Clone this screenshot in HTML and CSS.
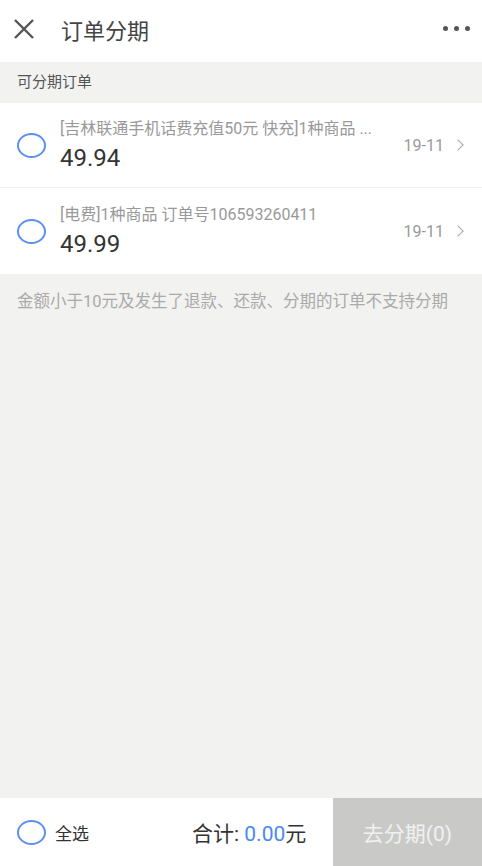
FILE: index.html
```html
<!DOCTYPE html>
<html lang="zh-CN">
    <head>
        <meta charset="UTF-8">
        <meta name="viewport" content="width=device-width, initial-scale=1.0">
        <title>订单分期</title>
        <link rel="stylesheet" href="styles.css">
    </head>
    <body>
        <header class="topbar">
            <svg class="close" width="22" height="20" viewBox="0 0 22 20">
                <path d="M2 1 L20 19 M20 1 L2 19" stroke="#555" stroke-width="2.4" fill="none"/>
            </svg>
            <h1>订单分期</h1>
            <div class="more"><i></i><i></i><i></i></div>
        </header>

        <main class="content">
            <div class="section-title">可分期订单</div>
            <ul class="orders">
                <li class="order">
                    <span class="radio"></span>
                    <div class="info">
                        <p class="name">[吉林联通手机话费充值50元 快充]1种商品 ...</p>
                        <p class="price">49.94</p>
                    </div>
                    <span class="date">19-11</span>
                    <span class="arrow"></span>
                </li>
                <li class="order">
                    <span class="radio"></span>
                    <div class="info">
                        <p class="name">[电费]1种商品 订单号106593260411</p>
                        <p class="price">49.99</p>
                    </div>
                    <span class="date">19-11</span>
                    <span class="arrow"></span>
                </li>
            </ul>
            <p class="note">金额小于10元及发生了退款、还款、分期的订单不支持分期</p>
        </main>

        <footer class="bottombar">
            <label class="select-all"><span class="radio"></span>全选</label>
            <div class="total">合计: <span>0.00</span>元</div>
            <button class="submit">去分期(0)</button>
        </footer>
    </body>
</html>
```

FILE: styles.css
```css
* {
    box-sizing: border-box;
    margin: 0;
    padding: 0;
}

body {
    width: 482px;
    height: 866px;
    display: flex;
    flex-direction: column;
    background-color: #f2f2f1;
    font-family: Roboto, "Noto Sans CJK SC", sans-serif;
    color: #333;
}

.topbar {
    height: 62px;
    background-color: #fff;
    display: flex;
    align-items: center;
    padding: 0 12px 4px 13px;
}

.close {
    margin-right: 26px;
}

.topbar h1 {
    flex: 1;
    font-size: 22px;
    font-weight: normal;
    color: #444;
}

.more {
    display: flex;
    gap: 6px;
    margin-top: -2px;
}

.more i {
    width: 5px;
    height: 5px;
    border-radius: 50%;
    background-color: #555;
}

.content {
    flex: 1;
}

.section-title {
    height: 41px;
    line-height: 41px;
    padding-left: 17px;
    font-size: 15px;
    color: #555;
}

.orders {
    list-style: none;
    background-color: #fff;
}

.order {
    height: 85px;
    display: flex;
    align-items: center;
    padding: 0 17px;
    border-bottom: 1px solid #efefef;
}

.order:last-child {
    height: 86px;
    border-bottom: 0;
}

.radio {
    width: 29px;
    height: 25px;
    border: 2.5px solid #5b8ff0;
    border-radius: 50%;
    flex-shrink: 0;
}

.info {
    flex: 1;
    margin-left: 14px;
    padding-top: 2px;
}

.name {
    font-size: 16px;
    color: #999;
    line-height: 20px;
    white-space: nowrap;
}

.price {
    font-size: 24px;
    line-height: 32px;
    margin-top: 3px;
    color: #333;
}

.date {
    font-size: 16px;
    color: #999;
    margin-right: 10px;
}

.arrow {
    width: 8px;
    height: 8px;
    border-top: 1.5px solid #aaa;
    border-right: 1.5px solid #aaa;
    transform: rotate(45deg);
    margin-right: 3px;
}

.note {
    padding: 14px 17px;
    font-size: 16.5px;
    color: #aaa;
}

.bottombar {
    height: 68px;
    background-color: #fff;
    display: flex;
    align-items: center;
}

.select-all {
    display: flex;
    align-items: center;
    gap: 9px;
    padding-left: 17px;
    font-size: 17px;
    color: #333;
    width: 192px;
}

.total {
    font-size: 21px;
    color: #333;
    flex: 1;
}

.total span {
    color: #4a89f3;
}

.submit {
    width: 149px;
    height: 68px;
    border: 0;
    background-color: #c9cac8;
    color: #f1f1f1;
    font-family: Roboto, "Noto Sans CJK SC", sans-serif;
    font-size: 21px;
}
```
